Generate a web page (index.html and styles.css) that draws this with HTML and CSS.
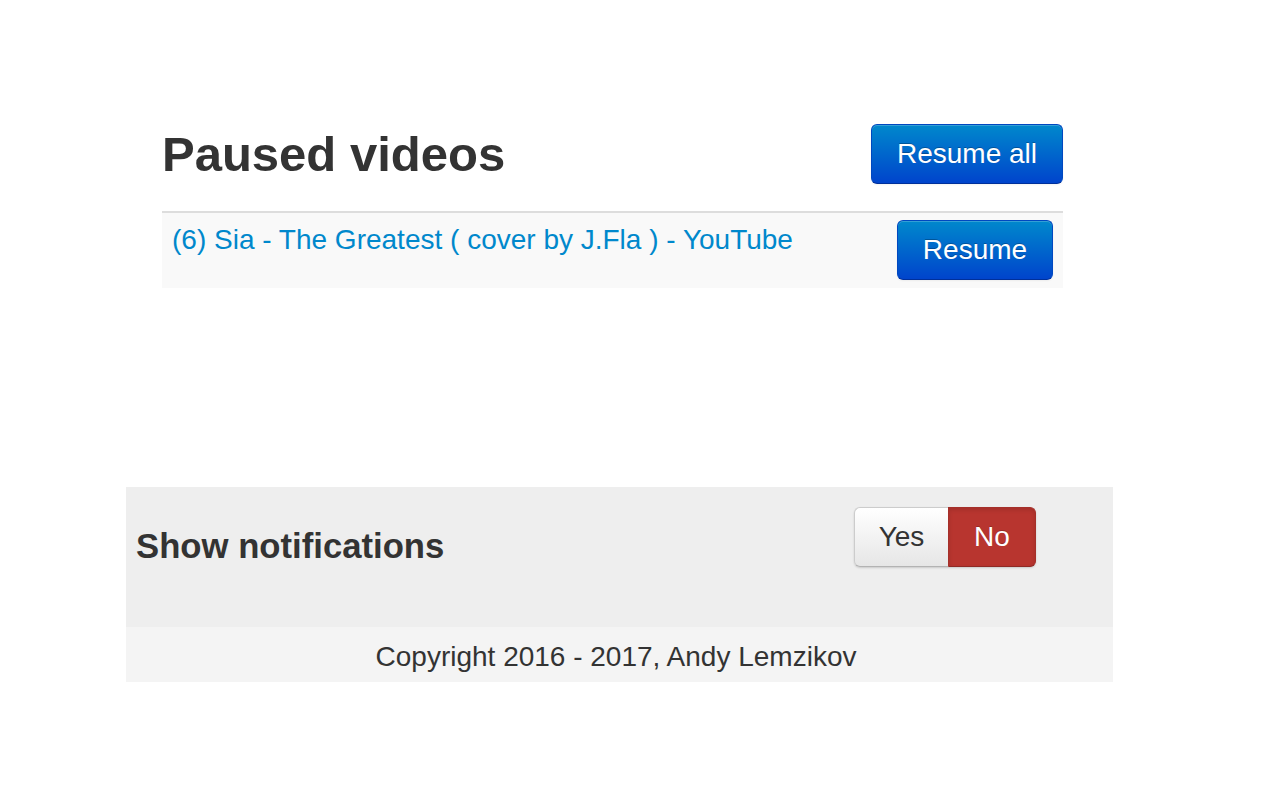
FILE: index.html
```html
<!DOCTYPE html>
<html>
<head>
<meta charset="utf-8">
<title>Paused videos</title>
<link rel="stylesheet" href="styles.css">
</head>
<body>
<main class="videos">
  <div class="videos-head">
    <h1 class="title">Paused videos</h1>
    <button class="btn btn-primary btn-all">Resume all</button>
  </div>
  <div class="video-list">
    <div class="video-row">
      <a class="video-link" href="#">(6) Sia - The Greatest ( cover by J.Fla ) - YouTube</a>
      <button class="btn btn-primary btn-one">Resume</button>
    </div>
  </div>
</main>
<section class="settings">
  <div class="setting-row">
    <h3 class="setting-label">Show notifications</h3>
    <div class="toggle">
      <button class="tog tog-yes">Yes</button>
      <button class="tog tog-no">No</button>
    </div>
  </div>
  <footer class="footer">Copyright 2016 - 2017, Andy Lemzikov</footer>
</section>
</body>
</html>
```

FILE: styles.css
```css
html, body {
  margin: 0;
  padding: 0;
  background: #fff;
}
body {
  font-family: "Liberation Sans", Arial, sans-serif;
  font-size: 28px;
  color: #333;
}
.videos {
  width: 901px;
  margin: 124px 0 0 162px;
}
.videos-head {
  display: flex;
  justify-content: space-between;
  align-items: flex-start;
  height: 60px;
}
.title {
  margin: 0;
  font-size: 49px;
  line-height: 60px;
  font-weight: bold;
  color: #333;
}
.btn {
  font-family: "Liberation Sans", Arial, sans-serif;
  font-size: 28px;
  line-height: 38px;
  height: 60px;
  border-radius: 6px;
  cursor: pointer;
  color: #fff;
  text-shadow: 0 -1px 0 rgba(0,0,0,0.25);
}
.btn-primary {
  background: linear-gradient(to bottom, #0088cc, #0044cc);
  border: 1px solid #0048c0;
  border-bottom-color: #00309a;
  box-shadow: inset 0 1px 0 rgba(255,255,255,0.2), 0 1px 2px rgba(0,0,0,0.05);
}
.btn-all {
  width: 192px;
}
.btn-one {
  width: 156px;
}
.video-list {
  margin-top: 27px;
  border-top: 2px solid #dddddd;
}
.video-row {
  display: flex;
  justify-content: space-between;
  align-items: flex-start;
  padding: 7px 10px 8px;
  background: #f9f9f9;
}
.video-link {
  color: #0088cc;
  text-decoration: none;
  line-height: 40px;
}
.settings {
  width: 987px;
  margin: 199px 0 0 126px;
}
.setting-row {
  display: flex;
  justify-content: space-between;
  align-items: flex-start;
  height: 140px;
  box-sizing: border-box;
  padding: 20px 77px 0 10px;
  background: #eeeeee;
}
.setting-label {
  margin: 20px 0 0;
  font-size: 34.7px;
  line-height: 38px;
  font-weight: bold;
  color: #333;
}
.toggle {
  display: flex;
  border-radius: 6px;
  box-shadow: 0 1px 2px rgba(0,0,0,0.15);
}
.tog {
  font-family: "Liberation Sans", Arial, sans-serif;
  font-size: 28px;
  line-height: 38px;
  height: 60px;
  padding: 0;
  cursor: pointer;
}
.tog-yes {
  width: 94px;
  color: #333;
  background: linear-gradient(to bottom, #ffffff, #e6e6e6);
  border: 1px solid #cccccc;
  border-bottom-color: #b3b3b3;
  border-right: none;
  border-radius: 6px 0 0 6px;
}
.tog-no {
  width: 88px;
  color: #fff;
  background: #b8352f;
  border: 1px solid #a5302a;
  border-bottom-color: #8f2a25;
  border-radius: 0 6px 6px 0;
  box-shadow: inset 0 2px 4px rgba(0,0,0,0.12);
  text-shadow: 0 -1px 0 rgba(0,0,0,0.2);
}
.footer {
  height: 55px;
  box-sizing: border-box;
  padding: 10px 7px 0 0;
  line-height: 40px;
  text-align: center;
  background: #f4f4f4;
  color: #333;
}
```
